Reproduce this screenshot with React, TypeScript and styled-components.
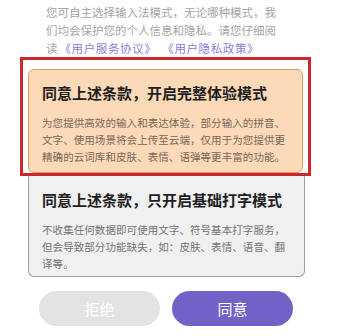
import React from 'react';
import styled, { createGlobalStyle } from 'styled-components';

const GlobalStyle = createGlobalStyle`
  html, body {
    margin: 0;
    padding: 0;
    background: #fff;
  }
  body {
    font-family: "Noto Sans CJK SC", "Noto Sans", sans-serif;
  }
`;

const Page = styled.div`
  width: 347px;
  height: 336px;
  overflow: hidden;
  background: #fff;
`;

const Intro = styled.p`
  margin: 0;
  padding: 3px 0 0 46px;
  width: 236px;
  font-size: 11.5px;
  line-height: 18px;
  color: #a4a4a4;
`;

// brackets come out half-width here, padding puts the gaps back
const Link = styled.span`
  display: inline-block;
  padding: 0 4px 0 2px;
  letter-spacing: 0.6px;
  color: #8a80d6;
`;

const Highlight = styled.div`
  margin-left: 20px;
  width: 280px;
  border: 3px solid #c9282d;
  padding: 9px 0 0 5px;
`;

const Card = styled.div<{ $active?: boolean }>`
  box-sizing: border-box;
  width: ${(p) => (p.$active ? '275px' : '277px')};
  border: 1px solid ${(p) => (p.$active ? '#e69a63' : '#a0a0a0')};
  background: ${(p) => (p.$active ? '#fcd9b7' : '#f0f0f0')};
  border-radius: ${(p) => (p.$active ? '6px' : '0 0 6px 6px')};
  border-top-color: ${(p) => (p.$active ? '#e69a63' : 'transparent')};
  padding: ${(p) => (p.$active ? '13px 12px 7px 13px' : '13px 12px 4px 13px')};
  margin-left: ${(p) => (p.$active ? '0' : '28px')};
`;

const Title = styled.div`
  font-size: 15px;
  font-weight: 700;
  line-height: 20px;
  color: #1f1f1f;
  margin-bottom: 11px;
`;

const Body = styled.div<{ $active?: boolean }>`
  width: 248px;
  font-size: 10.5px;
  letter-spacing: 0.07px;
  line-height: 17px;
  color: ${(p) => (p.$active ? '#7a6658' : '#737373')};
`;

const Actions = styled.div`
  display: flex;
  gap: 12px;
  margin: 14px 0 0 39px;
`;

const Button = styled.button<{ $primary?: boolean }>`
  width: 121px;
  height: 35px;
  border: none;
  border-radius: 18px;
  background: ${(p) => (p.$primary ? '#7362c6' : '#e3e3e3')};
  color: #fff;
  font-family: "Noto Sans CJK SC", "Noto Sans", sans-serif;
  font-size: 15px;
  padding: 0;
  cursor: pointer;
`;

export default function App() {
  return (
    <Page>
      <GlobalStyle />
      <Intro>
        您可自主选择输入法模式，无论哪种模式，我们均会保护您的个人信息和隐私。请您仔细阅读
        <Link>《用户服务协议》</Link>
        <Link>《用户隐私政策》</Link>
      </Intro>
      <Highlight>
        <Card $active>
          <Title>同意上述条款，开启完整体验模式</Title>
          <Body $active>
            为您提供高效的输入和表达体验，部分输入的拼音、文字、使用场景将会上传至云端，仅用于为您提供更精确的云词库和皮肤、表情、语弹等更丰富的功能。
          </Body>
        </Card>
      </Highlight>
      <Card>
        <Title>同意上述条款，只开启基础打字模式</Title>
        <Body>
          不收集任何数据即可使用文字、符号基本打字服务，但会导致部分功能缺失，如：皮肤、表情、语音、翻译等。
        </Body>
      </Card>
      <Actions>
        <Button>拒绝</Button>
        <Button $primary>同意</Button>
      </Actions>
    </Page>
  );
}
